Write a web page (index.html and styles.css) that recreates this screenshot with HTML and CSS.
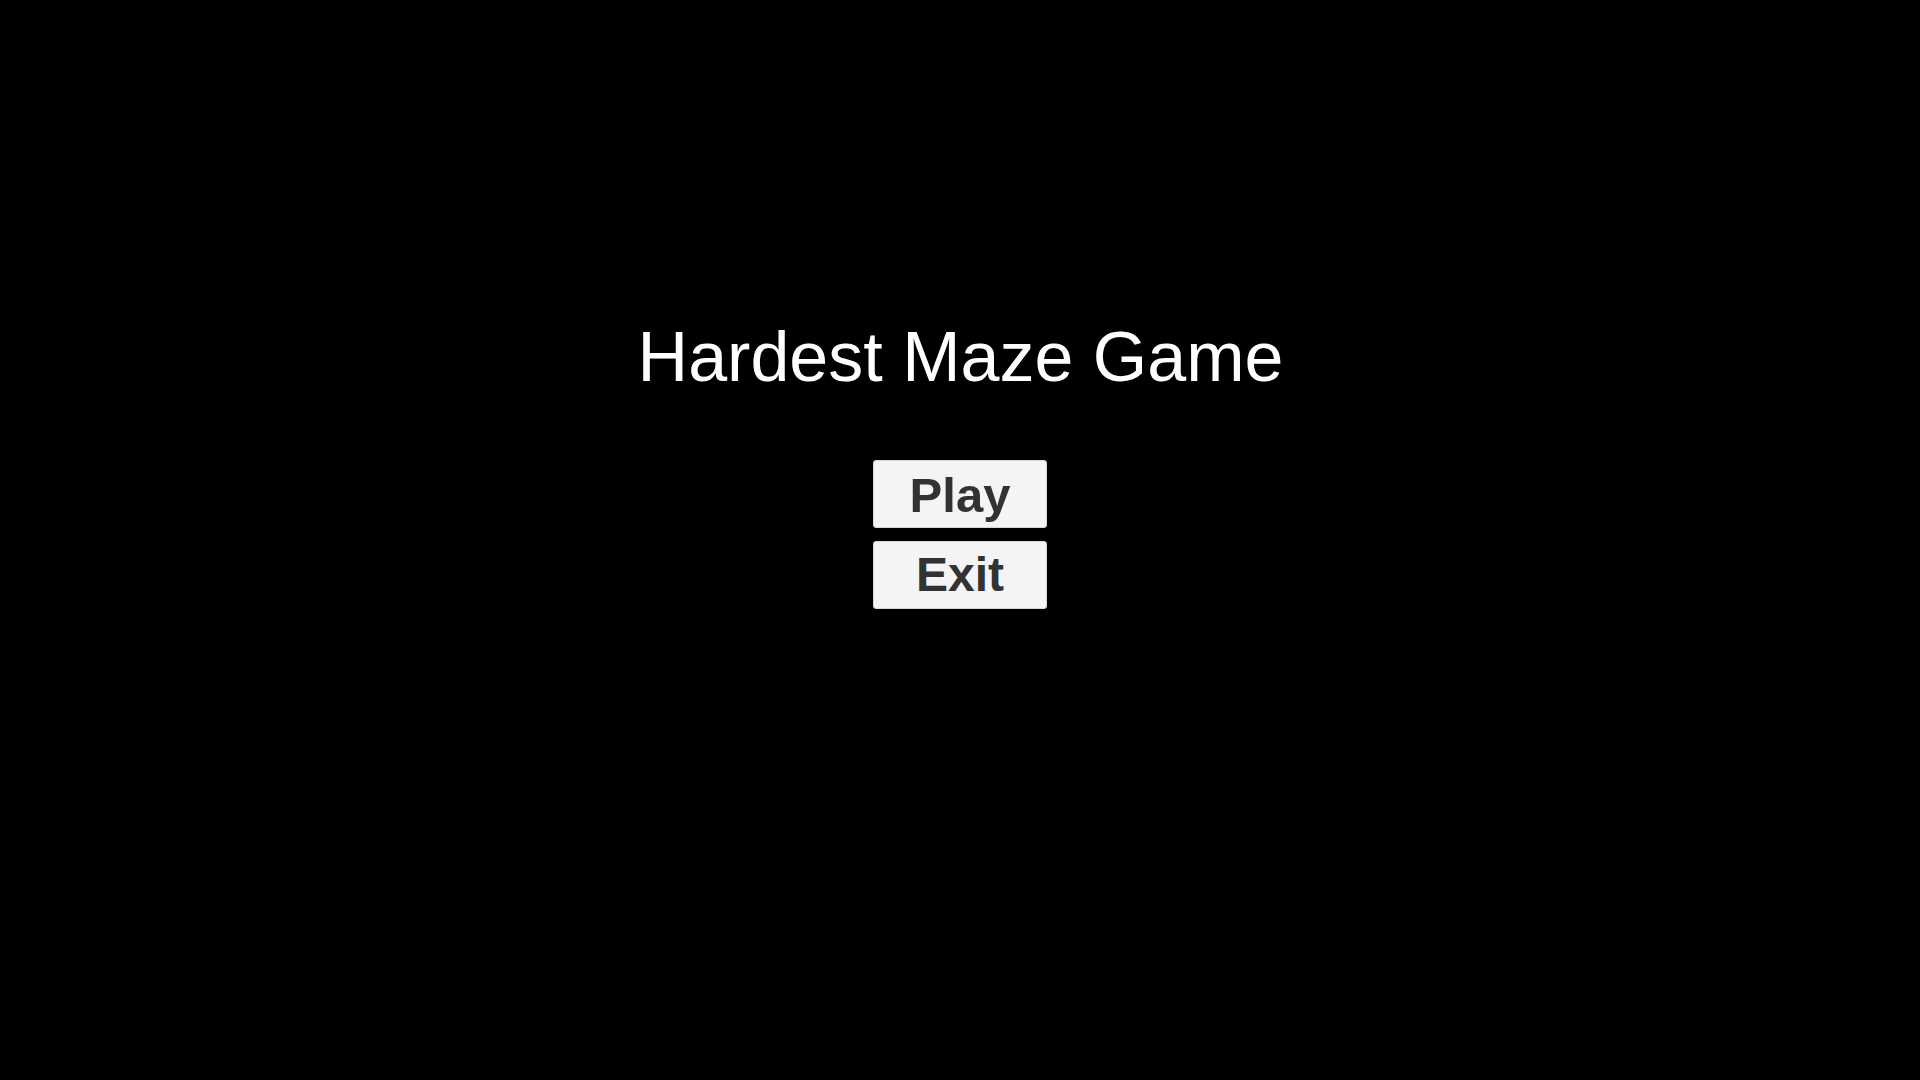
FILE: index.html
```html
<!DOCTYPE html>
<html lang="en">
<head>
<meta charset="utf-8">
<title>Hardest Maze Game</title>
<link rel="stylesheet" href="styles.css">
</head>
<body>
<main class="menu">
  <h1 class="title">Hardest Maze Game</h1>
  <div class="buttons">
    <button class="btn">Play</button>
    <button class="btn btn-exit">Exit</button>
  </div>
</main>
</body>
</html>
```
FILE: styles.css
```css
html, body {
  margin: 0;
  padding: 0;
  background: #000;
  height: 100%;
}
body {
  font-family: "Liberation Sans", Arial, sans-serif;
}
.menu {
  display: flex;
  flex-direction: column;
  align-items: center;
  padding-top: 317px;
}
.title {
  margin: 0;
  font-size: 70px;
  line-height: 80px;
  font-weight: 400;
  color: #fff;
  padding-left: 1px;
}
.buttons {
  margin-top: 63px;
  display: flex;
  flex-direction: column;
  gap: 13px;
}
.btn {
  width: 174px;
  height: 68px;
  border: 1px solid #d6d6d6;
  border-radius: 3px;
  background: #f4f4f4;
  color: #323232;
  font-family: "Liberation Sans", Arial, sans-serif;
  font-weight: 700;
  font-size: 49px;
  line-height: 66px;
  padding: 1px 0 0 0;
  text-align: center;
}
.btn-exit {
  font-size: 48px;
  padding-top: 0;
}
```
